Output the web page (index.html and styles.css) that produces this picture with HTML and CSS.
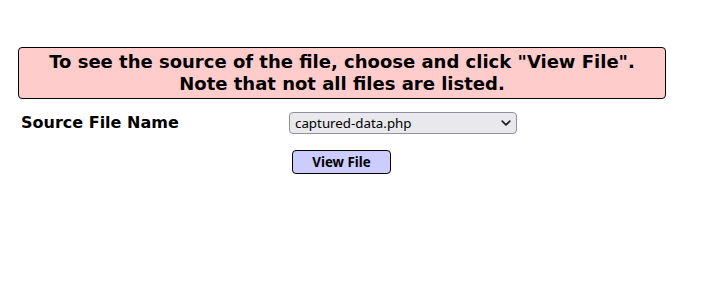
FILE: index.html
```html
<!DOCTYPE html>
<html>
<head>
<meta charset="utf-8">
<link rel="stylesheet" href="styles.css">
</head>
<body>
<div class="page">
  <div class="notice">
    <div class="line1">To see the source of the file, choose and click "View File".</div>
    <div class="line2">Note that not all files are listed.</div>
  </div>
  <form class="form">
    <div class="row">
      <label class="label" for="src">Source File Name</label>
      <span class="select-wrap">
        <select id="src" class="select">
          <option>captured-data.php</option>
        </select>
        <svg class="chevron" width="10" height="6" viewBox="0 0 10 6" aria-hidden="true">
          <path d="M1.2 1.2 L5 4.8 L8.8 1.2" fill="none" stroke="#1c1b22" stroke-width="1.7" stroke-linecap="round" stroke-linejoin="round"/>
        </svg>
      </span>
    </div>
    <div class="row actions">
      <button type="button" class="btn">View File</button>
    </div>
  </form>
</div>
</body>
</html>
```
FILE: styles.css
```css
html, body {
  margin: 0;
  padding: 0;
  background: #fff;
}
body {
  font-family: "DejaVu Sans", sans-serif;
  color: #000;
}
.page {
  padding: 47px 0 0 18px;
}
.notice {
  box-sizing: border-box;
  width: 648px;
  height: 52px;
  background: #ffcccc;
  border: 1px solid #000;
  border-radius: 4px;
  font-weight: bold;
  font-size: 18px;
  line-height: 22px;
  text-align: center;
  padding-top: 3px;
}
.line1 {
  white-space: nowrap;
}
.form {
  margin: 0;
}
.row {
  display: flex;
  align-items: center;
}
.row:first-child {
  margin-top: 13px;
}
.label {
  width: 268px;
  padding-left: 3px;
  font-weight: bold;
  font-size: 16px;
  position: relative;
  top: -1px;
}
.select-wrap {
  position: relative;
  display: inline-block;
  height: 22px;
}
.select {
  box-sizing: border-box;
  width: 228px;
  height: 22px;
  margin: 0;
  padding: 0 24px 0 5px;
  appearance: none;
  -webkit-appearance: none;
  background: #e9e9ed;
  border: 1px solid #8f8f9d;
  border-radius: 4px;
  font-family: "Noto Sans", "Open Sans", sans-serif;
  font-size: 13.333px;
  color: #000;
  line-height: 20px;
}
.chevron {
  position: absolute;
  left: 212px;
  top: 8px;
  pointer-events: none;
}
.actions {
  margin-top: 16px;
  padding-left: 274px;
}
.btn {
  box-sizing: border-box;
  width: 99px;
  height: 24px;
  margin: 0;
  padding: 0;
  background: #ccccff;
  border: 1px solid #000;
  border-radius: 4px;
  font-family: "Noto Sans", "Open Sans", sans-serif;
  font-weight: bold;
  font-size: 13.333px;
  color: #000;
}
```
